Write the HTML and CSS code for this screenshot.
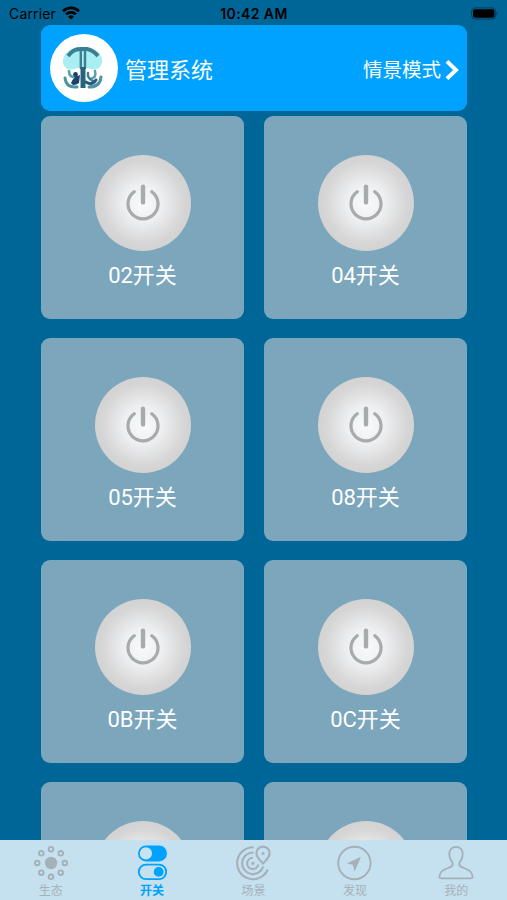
FILE: index.html
```html
<!DOCTYPE html>
<html lang="zh-CN">
<head>
    <meta charset="UTF-8">
    <title>管理系统</title>
    <link rel="stylesheet" href="styles.css">
</head>
<body>
    <div class="status-bar">
        <div class="carrier">
            <span>Carrier</span>
            <svg class="wifi" width="18" height="14" viewBox="0 0 18 14">
                <g fill="none" stroke="#000" stroke-width="2.6">
                    <path d="M1 5.2A11.4 11.4 0 0 1 17 5.2"/>
                    <path d="M4 8.4A7.2 7.2 0 0 1 14 8.4"/>
                </g>
                <path d="M9 13.6L6.2 10.7A4 4 0 0 1 11.8 10.7Z"/>
            </svg>
        </div>
        <div class="time">10:42 AM</div>
        <svg class="battery" width="28" height="14" viewBox="0 0 28 14">
            <rect x=".7" y=".9" width="24" height="11.2" rx="3.4" fill="none" stroke="#000" stroke-opacity=".4"/>
            <rect x="2" y="2.2" width="21.4" height="8.6" rx="2"/>
            <path d="M25.6 4.6Q28 6.5 25.6 8.4Z" fill-opacity=".45"/>
        </svg>
    </div>

    <div class="header">
        <div class="avatar">
            <svg width="42" height="44" viewBox="0 0 42 44">
                <path d="M20 1C9 1 1 7 1 16C1 21 6 25 12 23L20 21L29 23C36 25 41 20 40 13C38 5 30 1 20 1Z" fill="#a9eef0"/>
                <g fill="none" stroke="#3b7f92" stroke-linecap="round">
                    <path d="M6 10Q11 3 18 3H25Q31 4 36 10" stroke-width="4" stroke-linecap="butt"/>
                    <path d="M18.8 3V22M23 3V22" stroke-width="2.4"/>
                    <path d="M3 32Q4 42 15 41M39 31Q38 41 27 41" stroke-width="3" stroke="#4e93a3"/>
                    <path d="M7 25Q7 32 14 31M33 25Q35 32 28 33" stroke-width="2.6" stroke="#58a0aa"/>
                    <path d="M26 27Q25 32 31 35" stroke-width="2.4"/>
                    <path d="M24 36Q30 40 34 34" stroke-width="3" stroke="#285a7c"/>
                </g>
                <path d="M18.5 21H23.5V42H18.5Z" fill="#28627c"/>
                <path d="M18 29Q11 31 9 37Q11 41 17 37Z" fill="#1d3f70"/>
                <circle cx="13.5" cy="28.5" r="2.4" fill="#1d3f70"/>
            </svg>
        </div>
        <div class="title">管理系统</div>
        <div class="mode">情景模式</div>
        <svg class="arrow" width="14" height="22" viewBox="0 0 14 22">
            <path d="M2 2.4L11 11L2 19.6" fill="none" stroke="#fff" stroke-width="4"/>
        </svg>
    </div>

    <div class="switch-list" id="switches"></div>

    <div class="tab-bar">
        <div class="tab">
            <svg width="36" height="36" viewBox="0 0 36 36">
                <circle cx="18" cy="18" r="6.2" fill="currentColor"/>
                <g fill="none" stroke="currentColor" stroke-width="1.9">
                    <circle cx="18" cy="4.2" r="2.3"/>
                    <circle cx="27.7" cy="8.3" r="2.3"/>
                    <circle cx="31.8" cy="18" r="2.3"/>
                    <circle cx="27.7" cy="27.7" r="2.3"/>
                    <circle cx="18" cy="31.8" r="2.3"/>
                    <circle cx="8.3" cy="27.7" r="2.3"/>
                    <circle cx="4.2" cy="18" r="2.3"/>
                    <circle cx="8.3" cy="8.3" r="2.3"/>
                </g>
            </svg>
            <span>生态</span>
        </div>
        <div class="tab active">
            <svg width="36" height="36" viewBox="0 0 36 36">
                <rect x="4" y=".4" width="29" height="16" rx="8" fill="currentColor"/>
                <circle cx="11.9" cy="8.4" r="6.1" fill="#c8e2ef"/>
                <rect x="4.8" y="19.6" width="27.4" height="14.6" rx="7.3" fill="none" stroke="currentColor" stroke-width="1.8"/>
                <circle cx="24.7" cy="26.9" r="4.9" fill="currentColor"/>
            </svg>
            <span>开关</span>
        </div>
        <div class="tab">
            <svg width="36" height="36" viewBox="0 0 36 36">
                <g fill="none" stroke="currentColor" stroke-width="2.1">
                    <path d="M18.5 2.2A16 16 0 1 0 32.8 24.5"/>
                    <path d="M18.5 7.5A10.8 10.8 0 1 0 28.3 21.5"/>
                    <path d="M18 12.8A5.6 5.6 0 1 0 23.3 19.5"/>
                    <path d="M28 18.6Q21.4 12 21.4 8.2A6.6 6.6 0 0 1 34.6 8.2Q34.6 12 28 18.6Z"/>
                </g>
                <circle cx="18" cy="18.3" r="1.6" fill="currentColor"/>
                <circle cx="28" cy="8.4" r="1.5" fill="currentColor"/>
            </svg>
            <span>场景</span>
        </div>
        <div class="tab">
            <svg width="36" height="36" viewBox="0 0 36 36">
                <circle cx="17.4" cy="18" r="16.2" fill="none" stroke="currentColor" stroke-width="1.9"/>
                <path d="M24 11.8L9.8 18.6L15.8 19.8L17.6 26.4Z" fill="currentColor"/>
            </svg>
            <span>发现</span>
        </div>
        <div class="tab">
            <svg width="36" height="36" viewBox="0 0 36 36">
                <path d="M18 1.9C13.8 1.9 11.3 4.8 11.3 9C11.3 12.4 12.3 14.7 14 16.6C15 18.5 14.6 20.8 12.8 21.9C8.2 24 1.8 24.8 1.4 32Q1.4 33.4 3 33.4H33Q34.6 33.4 34.6 32C34.2 24.8 27.8 24 23.2 21.9C21.4 20.8 21 18.5 22 16.6C23.7 14.7 24.7 12.4 24.7 9C24.7 4.8 22.2 1.9 18 1.9Z" fill="none" stroke="currentColor" stroke-width="1.8"/>
            </svg>
            <span>我的</span>
        </div>
    </div>

    <script src="script.js"></script>
</body>
</html>
```
FILE: styles.css
```css
* {
    box-sizing: border-box;
}

body {
    display: flex;
    flex-direction: column;
    height: 900px;
    margin: 0;
    overflow: hidden;
    font-family: Roboto, "Noto Sans CJK SC", sans-serif;
    background-color: #006698;
}

.status-bar {
    display: grid;
    grid-template-columns: 1fr auto 1fr;
    align-items: center;
    flex: none;
    height: 25px;
    padding: 2px 8px 0 9px;
    font-family: Inter, sans-serif;
    font-size: 14px;
    line-height: 20px;
    color: #000;
}

.carrier {
    display: flex;
    align-items: center;
    gap: 6px;
    letter-spacing: 0.15px;
}

.wifi {
    margin-bottom: 2px;
}

.time {
    font-weight: 600;
    letter-spacing: 0.4px;
}

.battery {
    justify-self: end;
}

.header {
    display: flex;
    align-items: center;
    flex: none;
    height: 86px;
    margin: 0 40px 0 41px;
    padding: 0 8px 0 9px;
    border-radius: 9px;
    color: white;
    background-color: #00a2ff;
}

.avatar {
    display: flex;
    align-items: center;
    justify-content: center;
    width: 68px;
    height: 68px;
    border-radius: 50%;
    background-color: white;
}

.avatar svg {
    margin-right: 3px;
}

.title {
    margin-left: 7px;
    font-size: 22px;
}

.mode {
    margin-left: auto;
    font-size: 19.5px;
}

.arrow {
    margin: 4px 0 0 4px;
}

.switch-list {
    display: grid;
    grid-template-columns: 203px 203px;
    grid-auto-rows: 203px;
    gap: 19px 20px;
    flex: 1;
    min-height: 0;
    margin: 5px 40px 0 41px;
    overflow: hidden;
}

.switch {
    display: flex;
    flex-direction: column;
    align-items: center;
    padding-top: 39px;
    border-radius: 9px;
    background-color: #7ba6bc;
}

.power {
    display: flex;
    align-items: center;
    justify-content: center;
    width: 96px;
    height: 96px;
    padding: 0 0 3px;
    border: none;
    border-radius: 50%;
    background: radial-gradient(circle, #f8fafb 0%, #eeeff0 28%, #d6d6d7 60%, #cbc9c8 100%);
    cursor: pointer;
}

.name {
    margin-top: 8px;
    font-size: 22px;
    line-height: 34px;
    color: white;
}

.tab-bar {
    display: grid;
    grid-template-columns: repeat(5, 1fr);
    flex: none;
    height: 60px;
    background-color: #c5e0ee;
}

.tab {
    display: flex;
    flex-direction: column;
    align-items: center;
    padding-top: 5px;
    font-size: 12px;
    line-height: 20px;
    color: #a5b1b9;
}

.tab.active {
    font-weight: bold;
    color: #00a2ff;
}
```
FILE: script.js
```js
// 最后一排还没有名称
const names = ['02开关', '04开关', '05开关', '08开关', '0B开关', '0C开关', '', ''];
const list = document.getElementById('switches');

names.forEach(name => {
    const item = document.createElement('div');
    item.className = 'switch';
    item.innerHTML = `
        <button class="power">
            <svg width="34" height="38" viewBox="0 0 34 38" fill="none" stroke="#a6abae" stroke-linecap="round">
                <path d="M8.2 8.7A15 15 0 1 0 25.8 8.7" stroke-width="3.2"/>
                <path d="M17 3.8V19.4" stroke-width="4.4"/>
            </svg>
        </button>
        <div class="name">${name}</div>`;
    list.appendChild(item);
});
```
